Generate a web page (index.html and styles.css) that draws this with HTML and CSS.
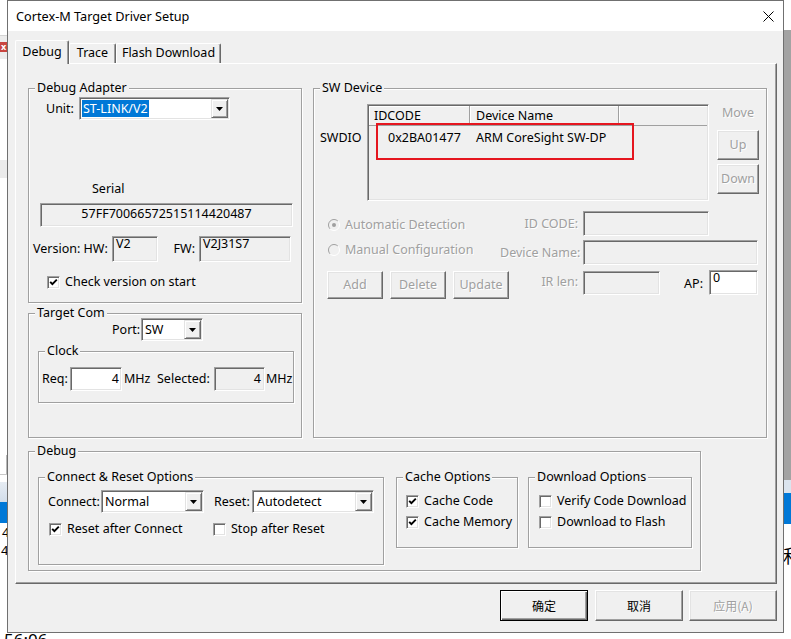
FILE: index.html
```html
<!DOCTYPE html>
<html>
<head>
<meta charset="utf-8">
<title>Cortex-M Target Driver Setup</title>
<link rel="stylesheet" href="styles.css">
</head>
<body>
<div class="top">
  <div class="bg-left">
    <div class="bl-a"></div>
    <div class="bl-b"><span class="redx">x</span></div>
    <div class="bl-c"></div>
    <div class="bl-d"></div>
    <div class="bl-e"></div>
    <div class="bl-f"></div>
    <div class="bl-g"></div>
    <div class="bl-h"></div>
    <div class="bl-i"></div>
    <div class="bl-j">4</div>
    <div class="bl-k">4</div>
  </div>
  <div class="dialog">
    <div class="titlebar">
      <span class="title">Cortex-M Target Driver Setup</span>
      <svg class="close" width="11" height="11" viewBox="0 0 11 11"><path d="M0.5 0.5L10.5 10.5M10.5 0.5L0.5 10.5" stroke="#000" stroke-width="1" fill="none"/></svg>
    </div>
    <div class="dlg-body">
      <div class="tabs">
        <div class="tab tab-sel tab-debug">Debug</div>
        <div class="tab tab-trace">Trace</div>
        <div class="tab tab-flash">Flash Download</div>
      </div>
      <div class="panel">
        <div class="toprow">
          <div class="leftcol">
            <fieldset class="gb gb-adapter">
              <legend>Debug Adapter</legend>
              <div class="row unit-row">
                <span class="lbl w-unit">Unit:</span>
                <div class="combo combo-unit">
                  <span class="cval"><span class="hl">ST-LINK/V2</span></span>
                  <span class="ddbtn"><svg width="7" height="4" viewBox="0 0 7 4"><path d="M0 0H7L3.5 4Z" fill="#000"/></svg></span>
                </div>
              </div>
              <div class="serial-lbl">Serial</div>
              <div class="field serial-field">57FF70066572515114420487</div>
              <div class="row ver-row">
                <span class="lbl w-hw">Version: HW:</span>
                <div class="field tfield hw-field"><span>V2</span></div>
                <span class="lbl w-fw">FW:</span>
                <div class="field tfield fw-field"><span>V2J31S7</span></div>
              </div>
              <div class="row check-ver">
                <span class="chk"><svg width="9" height="9" viewBox="0 0 9 9"><path d="M1.2 3.8L3.4 6.2L7.8 1.6" fill="none" stroke="#000" stroke-width="1.9"/></svg></span>
                <span class="chk-text">Check version on start</span>
              </div>
            </fieldset>
            <fieldset class="gb gb-tcom">
              <legend>Target Com</legend>
              <div class="row port-row">
                <span class="lbl w-port">Port:</span>
                <div class="combo combo-port">
                  <span class="cval">SW</span>
                  <span class="ddbtn"><svg width="7" height="4" viewBox="0 0 7 4"><path d="M0 0H7L3.5 4Z" fill="#000"/></svg></span>
                </div>
              </div>
              <fieldset class="gb gb-clock">
                <legend>Clock</legend>
                <div class="row req-row">
                  <span class="lbl w-req">Req:</span>
                  <div class="field rfield white req-field">4</div>
                  <span class="lbl w-mhz">MHz</span>
                  <span class="lbl w-sel">Selected:</span>
                  <div class="field rfield sel-field">4</div>
                  <span class="lbl w-mhz2">MHz</span>
                </div>
              </fieldset>
            </fieldset>
          </div>
          <fieldset class="gb gb-sw">
            <legend>SW Device</legend>
            <div class="sw-top">
              <div class="swdio">SWDIO</div>
              <div class="field listview">
                <div class="lv-head">
                  <div class="lv-h lv-c1">IDCODE</div>
                  <div class="lv-h lv-c2">Device Name</div>
                  <div class="lv-h lv-c3"></div>
                </div>
                <div class="lv-row">
                  <div class="lv-d1">0x2BA01477</div>
                  <div class="lv-d2">ARM CoreSight SW-DP</div>
                </div>
                <div class="redbox"></div>
              </div>
              <div class="movecol">
                <div class="move-lbl dis">Move</div>
                <div class="btn dis btn-up">Up</div>
                <div class="btn dis btn-down">Down</div>
              </div>
            </div>
            <div class="sw-row sw-a">
              <div class="radio-item ri-a">
                <svg width="12" height="12" viewBox="0 0 12 12"><circle cx="6" cy="6" r="5.5" fill="#f0f0f0"/><path d="M2.1 9.9A5.5 5.5 0 0 1 9.9 2.1" stroke="#a0a0a0" fill="none"/><path d="M9.9 2.1A5.5 5.5 0 0 1 2.1 9.9" stroke="#fff" fill="none"/><circle cx="6" cy="6" r="2" fill="#a0a0a0"/></svg>
                <span class="dis">Automatic Detection</span>
              </div>
              <span class="rlbl dis la">ID CODE:</span>
              <div class="field f-id"></div>
            </div>
            <div class="sw-row sw-b">
              <div class="radio-item ri-b">
                <svg width="12" height="12" viewBox="0 0 12 12"><circle cx="6" cy="6" r="5.5" fill="#f0f0f0"/><path d="M2.1 9.9A5.5 5.5 0 0 1 9.9 2.1" stroke="#a0a0a0" fill="none"/><path d="M9.9 2.1A5.5 5.5 0 0 1 2.1 9.9" stroke="#fff" fill="none"/></svg>
                <span class="dis">Manual Configuration</span>
              </div>
              <span class="rlbl dis lb">Device Name:</span>
              <div class="field f-dev"></div>
            </div>
            <div class="sw-row sw-c">
              <div class="btn dis b-add">Add</div>
              <div class="btn dis b-del">Delete</div>
              <div class="btn dis b-upd">Update</div>
              <span class="rlbl dis lc">IR len:</span>
              <div class="field f-ir"></div>
              <span class="ap-lbl">AP:</span>
              <div class="field tfield white f-ap"><span>0</span></div>
            </div>
          </fieldset>
        </div>
        <fieldset class="gb gb-debug">
          <legend>Debug</legend>
          <div class="dbg-row">
            <fieldset class="gb gb-cro">
              <legend>Connect &amp; Reset Options</legend>
              <div class="row cro-r1">
                <span class="lbl w-conn">Connect:</span>
                <div class="combo combo-conn">
                  <span class="cval">Normal</span>
                  <span class="ddbtn"><svg width="7" height="4" viewBox="0 0 7 4"><path d="M0 0H7L3.5 4Z" fill="#000"/></svg></span>
                </div>
                <span class="lbl w-reset">Reset:</span>
                <div class="combo combo-reset">
                  <span class="cval">Autodetect</span>
                  <span class="ddbtn"><svg width="7" height="4" viewBox="0 0 7 4"><path d="M0 0H7L3.5 4Z" fill="#000"/></svg></span>
                </div>
              </div>
              <div class="row cro-r2">
                <div class="chk-item ci-rac">
                  <span class="chk"><svg width="9" height="9" viewBox="0 0 9 9"><path d="M1.2 3.8L3.4 6.2L7.8 1.6" fill="none" stroke="#000" stroke-width="1.9"/></svg></span>
                  <span class="chk-text">Reset after Connect</span>
                </div>
                <div class="chk-item">
                  <span class="chk"></span>
                  <span class="chk-text">Stop after Reset</span>
                </div>
              </div>
            </fieldset>
            <fieldset class="gb gb-cache">
              <legend>Cache Options</legend>
              <div class="opt-row cache-r1">
                <span class="chk"><svg width="9" height="9" viewBox="0 0 9 9"><path d="M1.2 3.8L3.4 6.2L7.8 1.6" fill="none" stroke="#000" stroke-width="1.9"/></svg></span>
                <span class="chk-text">Cache Code</span>
              </div>
              <div class="opt-row cache-r2">
                <span class="chk"><svg width="9" height="9" viewBox="0 0 9 9"><path d="M1.2 3.8L3.4 6.2L7.8 1.6" fill="none" stroke="#000" stroke-width="1.9"/></svg></span>
                <span class="chk-text">Cache Memory</span>
              </div>
            </fieldset>
            <fieldset class="gb gb-dl">
              <legend>Download Options</legend>
              <div class="opt-row dl-row dl-r1">
                <span class="chk"></span>
                <span class="chk-text">Verify Code Download</span>
              </div>
              <div class="opt-row dl-row dl-r2">
                <span class="chk"></span>
                <span class="chk-text">Download to Flash</span>
              </div>
            </fieldset>
          </div>
        </fieldset>
      </div>
      <div class="buttons">
        <div class="btn btn-def dbtn">确定</div>
        <div class="btn dbtn btn-cancel">取消</div>
        <div class="btn dbtn dis btn-apply">应用(A)</div>
      </div>
    </div>
  </div>
  <div class="bg-right">
    <div class="br-a"></div>
    <div class="br-b"></div>
    <div class="br-c"></div>
    <div class="br-d"></div>
    <div class="br-e"></div>
    <div class="br-f">和</div>
  </div>
</div>
<div class="bottom-strip"><span>56:06</span></div>
</body>
</html>
```

FILE: styles.css
```css
* { box-sizing: border-box; }
html, body { margin: 0; padding: 0; }
body {
  width: 791px;
  height: 639px;
  overflow: hidden;
  background: #fff;
  font-family: "Noto Sans", "Noto Sans CJK SC", "Liberation Sans", sans-serif;
  font-size: 12.5px;
  line-height: 16px;
  color: #000;
}

/* ---------- background window scraps ---------- */
.top { display: flex; height: 633px; }
.bg-left, .bg-right {
  width: 7px;
  flex: none;
  display: flex;
  flex-direction: column;
  overflow: hidden;
  white-space: nowrap;
}
.bl-a { height: 35px; flex: none; }
.bl-b { height: 24px; flex: none; background: #ececec; border-top: 1px solid #d4d4d4; padding-top: 6px; }
.redx {
  display: block;
  width: 7px;
  height: 10px;
  background: #c9453f;
  color: #fff;
  font-size: 9px;
  line-height: 9px;
  font-weight: bold;
  padding-left: 1px;
}
.bl-c { height: 101px; flex: none; }
.bl-d { height: 18px; flex: none; background: #ebebeb; }
.bl-e { height: 277px; flex: none; }
.bl-f { height: 19px; flex: none; border-right: 1px solid #b8b8b8; }
.bl-g { height: 8px; flex: none; border-top: 1px solid #c8c8c8; }
.bl-h { height: 20px; flex: none; background: linear-gradient(#e6ecf3, #d2ddea); }
.bl-i { height: 21px; flex: none; background: #0078d7; }
.bl-j { height: 18px; flex: none; font-size: 13px; line-height: 18px; padding-left: 2px; }
.bl-k { height: 18px; flex: none; font-size: 13px; line-height: 18px; padding-left: 1px; }

.br-a { height: 30px; flex: none; }
.br-b { height: 450px; flex: none; background: #a3a3a3; }
.br-c { height: 13px; flex: none; background: #dbe4ee; }
.br-d { height: 31px; flex: none; background: #0078d7; }
.br-e { height: 22px; flex: none; }
.br-f { height: 22px; flex: none; font-size: 18px; line-height: 20px; margin-left: -1px; }

.bottom-strip {
  height: 6px;
  overflow: hidden;
  padding-left: 4px;
  font-size: 17px;
  line-height: 13px;
}

/* ---------- dialog ---------- */
.dialog {
  width: 777px;
  height: 633px;
  flex: none;
  border: 1px solid #707070;
  display: flex;
  flex-direction: column;
  background: #f0f0f0;
}
.titlebar {
  height: 30px;
  flex: none;
  background: #fff;
  display: flex;
  align-items: center;
  justify-content: space-between;
  padding: 0 9px 0 8px;
  font-size: 12.7px;
}
.close { display: block; }
.dlg-body {
  flex: 1;
  padding: 9px 6px 0 7px;
}

/* tabs */
.tabs {
  display: flex;
  align-items: flex-end;
  height: 23px;
  position: relative;
  z-index: 1;
}
.tab {
  height: 20px;
  line-height: 18px;
  text-align: center;
  background: #f0f0f0;
  border-top: 1px solid #fff;
  border-left: 1px solid #fff;
  border-right: 1px solid #696969;
  box-shadow: inset -1px 0 #a0a0a0;
  border-radius: 2px 2px 0 0;
}
.tab-sel { height: 24px; margin-bottom: -1px; line-height: 21px; }
.tab-debug { width: 54px; }
.tab-trace { width: 47px; }
.tab-flash { width: 105px; }

.panel {
  height: 521px;
  border: 1px solid;
  border-color: #fff #696969 #696969 #fff;
  box-shadow: inset -1px -1px #a0a0a0;
  padding: 16px 0 0 12px;
}
.toprow { display: flex; height: 358px; }
.leftcol { width: 274px; flex: none; display: flex; flex-direction: column; }

/* group boxes */
.gb {
  margin: 0;
  padding: 0;
  min-width: 0;
  border: 1px solid #a0a0a0;
  box-shadow: inset 1px 1px #fff, 1px 1px #fff;
  flex: none;
}
.gb > legend {
  padding: 0 2px;
  margin-left: 6px;
  line-height: 16px;
  background: #f0f0f0;
}
.gb-adapter { width: 274px; height: 223px; }
.gb-tcom { width: 274px; height: 133px; margin-top: 2px; }
.gb-clock { width: 256px; height: 60px; margin: 2px 0 0 9px; }
.gb-sw { width: 454px; height: 358px; margin-left: 11px; }
.gb-debug { width: 673px; height: 128px; margin-top: 5px; }
.gb-cro { width: 346px; height: 96px; }
.gb-cache { width: 122px; height: 79px; margin-left: 12px; }
.gb-dl { width: 164px; height: 79px; margin-left: 10px; }

/* generic controls */
.row { display: flex; align-items: center; }
.lbl { display: block; flex: none; white-space: nowrap; }
.dis { color: #a0a0a0; text-shadow: 1px 1px 0 #fff; }

.field {
  flex: none;
  border: 1px solid;
  border-color: #a0a0a0 #fff #fff #a0a0a0;
  padding: 1px;
  box-shadow: inset 1px 1px #696969, inset -1px -1px #e3e3e3;
  background: #f0f0f0;
  white-space: nowrap;
}
.field.white { background: #fff; }
.tfield { line-height: 12px; }
.tfield span { margin-left: 2px; }
.rfield { text-align: right; line-height: 20px; }

.combo {
  flex: none;
  display: flex;
  height: 23px;
  border: 1px solid;
  border-color: #a0a0a0 #fff #fff #a0a0a0;
  padding: 1px;
  box-shadow: inset 1px 1px #696969, inset -1px -1px #e3e3e3;
  background: #fff;
}
.cval { flex: 1; padding-left: 2px; line-height: 19px; white-space: nowrap; overflow: hidden; }
.hl {
  display: inline-block;
  background: #0078d7;
  color: #fff;
  line-height: 17px;
  height: 17px;
  margin-top: 1px;
  padding: 0 1px;
  margin-left: -1px;
}
.ddbtn {
  width: 17px;
  height: 19px;
  flex: none;
  display: flex;
  align-items: center;
  justify-content: center;
  background: #f0f0f0;
  border: 1px solid;
  border-color: #e3e3e3 #696969 #696969 #e3e3e3;
  box-shadow: inset 1px 1px #fff, inset -1px -1px #a0a0a0;
}
.ddbtn svg { display: block; }

.chk {
  width: 13px;
  height: 13px;
  flex: none;
  display: flex;
  align-items: center;
  justify-content: center;
  border: 1px solid;
  border-color: #a0a0a0 #fff #fff #a0a0a0;
  box-shadow: inset 1px 1px #696969, inset -1px -1px #e3e3e3;
  background: #fff;
}
.chk svg { display: block; }
.chk-text { margin-left: 5px; white-space: nowrap; }

.btn {
  flex: none;
  display: flex;
  align-items: center;
  justify-content: center;
  background: #f0f0f0;
  border: 1px solid;
  border-color: #fff #696969 #696969 #fff;
  box-shadow: inset -1px -1px #a0a0a0, inset 1px 1px #e3e3e3;
  white-space: nowrap;
}
.btn-def {
  border-color: #000;
  box-shadow: inset 1px 1px #fff, inset -1px -1px #696969, inset -2px -2px #a0a0a0;
}

/* Debug Adapter */
.unit-row { margin-top: 1px; height: 23px; padding-left: 17px; }
.w-unit { width: 33px; }
.combo-unit { width: 151px; }
.serial-lbl { margin-top: 61px; padding-left: 63px; }
.serial-field { margin: 6px 0 0 11px; width: 253px; height: 24px; text-align: center; line-height: 17px; }
.ver-row { margin-top: 9px; height: 26px; padding-left: 4px; }
.w-hw { width: 79px; }
.hw-field { width: 46px; height: 26px; }
.w-fw { width: 41px; text-align: right; padding-right: 4px; }
.fw-field { width: 92px; height: 26px; }
.check-ver { margin-top: 12px; height: 16px; padding-left: 18px; }

/* Target Com */
.port-row { margin-top: -3px; height: 23px; padding-left: 83px; }
.w-port { width: 29px; }
.combo-port { width: 62px; }
.req-row { margin-top: 8px; height: 24px; padding-left: 3px; }
.w-req { width: 28px; }
.req-field { width: 52px; height: 24px; padding-right: 2px; }
.w-mhz { margin-left: 2px; width: 27px; }
.w-sel { margin-left: 6px; width: 57px; }
.sel-field { width: 51px; height: 24px; padding-right: 3px; }
.w-mhz2 { margin-left: 1px; }

/* SW Device */
.sw-top { display: flex; margin-top: 8px; padding-left: 6px; align-items: flex-start; }
.swdio { width: 47px; flex: none; margin-top: 26px; }
.listview { width: 342px; height: 97px; position: relative; }
.lv-head { display: flex; height: 20px; }
.lv-h {
  height: 20px;
  line-height: 19px;
  border-right: 1px solid #a0a0a0;
  border-bottom: 1px solid #a0a0a0;
  box-shadow: inset 1px 1px #fff;
  white-space: nowrap;
}
.lv-c1 { width: 101px; padding-left: 5px; }
.lv-c2 { width: 149px; padding-left: 6px; }
.lv-c3 { flex: 1; border-right: none; }
.lv-row { display: flex; margin-top: 4px; }
.lv-d1 { width: 101px; padding-left: 19px; }
.lv-d2 { width: 149px; padding-left: 6px; white-space: nowrap; }
.redbox {
  position: absolute;
  left: 8px;
  top: 18px;
  width: 258px;
  height: 37px;
  border: 2px solid #e5161f;
}
.movecol { width: 42px; margin-left: 8px; flex: none; }
.move-lbl { margin-top: 1px; text-align: center; }
.btn-up { margin-top: 9px; height: 30px; }
.btn-down { margin-top: 4px; height: 30px; }

.sw-row { display: flex; align-items: flex-start; }
.sw-a { margin-top: 10px; height: 25px; padding-left: 14px; }
.sw-b { margin-top: 4px; height: 25px; padding-left: 14px; }
.sw-c { margin-top: 5px; height: 29px; }
.radio-item { display: flex; align-items: center; width: 172px; flex: none; white-space: nowrap; }
.radio-item svg { display: block; margin-right: 5px; flex: none; }
.ri-a { margin-top: 6px; }
.ri-b { margin-top: 2px; }
.rlbl { display: block; flex: none; text-align: right; margin-right: 5px; white-space: nowrap; }
.la { width: 78px; margin-top: 5px; }
.lb { width: 78px; margin-top: 5px; }
.f-id { width: 126px; height: 25px; }
.f-dev { width: 175px; height: 25px; }
.b-add { margin: 1px 0 0 13px; width: 56px; height: 28px; }
.b-del { margin: 1px 0 0 7px; width: 56px; height: 28px; }
.b-upd { margin: 1px 0 0 7px; width: 56px; height: 28px; }
.lc { width: 69px; margin-top: 4px; }
.f-ir { width: 77px; height: 24px; margin-top: 1px; }
.ap-lbl { display: block; width: 45px; text-align: right; padding-right: 2px; margin-top: 6px; flex: none; }
.f-ap { width: 49px; height: 25px; margin-left: 4px; }

/* Debug section */
.dbg-row { display: flex; align-items: flex-start; margin: 10px 0 0 9px; }
.cro-r1 { margin-top: 5px; height: 23px; padding-left: 9px; }
.w-conn { width: 53px; }
.combo-conn { width: 103px; }
.w-reset { width: 48px; padding-left: 10px; }
.combo-reset { width: 122px; }
.combo-reset .cval { padding-left: 3px; }
.cro-r2 { margin-top: 8px; height: 16px; padding-left: 10px; }
.chk-item { display: flex; align-items: center; }
.ci-rac { width: 164px; }
.opt-row { display: flex; align-items: center; height: 16px; margin-left: 9px; }
.cache-r1 { margin-top: 8px; }
.cache-r2 { margin-top: 5px; }
.dl-row { margin-left: 10px; width: 149px; overflow: hidden; }
.dl-r1 { margin-top: 8px; }
.dl-r2 { margin-top: 5px; }

/* bottom buttons */
.buttons { display: flex; justify-content: flex-end; margin-top: 6px; }
.dbtn {
  width: 88px;
  height: 31px;
  font-family: "Noto Sans CJK SC", sans-serif;
  font-size: 12px;
}
.btn-cancel { margin-left: 7px; }
.btn-apply { margin-left: 6px; }
```
